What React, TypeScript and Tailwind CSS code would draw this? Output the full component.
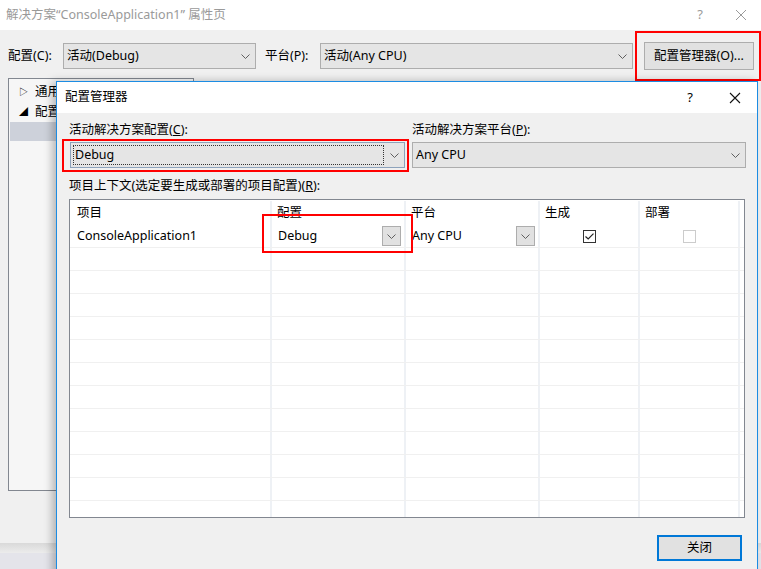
import React from 'react';

const FONT = { fontFamily: '"Noto Sans", "Noto Sans CJK SC", sans-serif' };

function Chevron({ className = '' }: { className?: string }) {
  return (
    <svg width="9" height="5" viewBox="0 0 9 5" className={className}>
      <path d="M0.5 0.5 L4.5 4.5 L8.5 0.5" fill="none" stroke="#5f5f5f" strokeWidth="1" />
    </svg>
  );
}

function Select({ value, width, focused = false }: { value: string; width: string; focused?: boolean }) {
  return (
    <div
      className={`${width} h-[26px] flex items-center border bg-[#e5e5e5] ${
        focused ? 'border-[#8da2bb]' : 'border-[#adadad]'
      }`}
    >
      {focused ? (
        <div className="ml-[2px] h-[20px] flex-1 border border-dotted border-[#333] flex items-center pl-[1px]">
          <span className="text-[12.5px] text-black">{value}</span>
        </div>
      ) : (
        <span className="flex-1 pl-[3px] text-[12.5px] text-black">{value}</span>
      )}
      <div className="w-[20px] flex items-center justify-center">
        <Chevron />
      </div>
    </div>
  );
}

function CellDrop({ value }: { value: string }) {
  return (
    <div className="flex items-center h-full pl-[6px] pr-[3px]">
      <span className="flex-1 text-[12.5px]">{value}</span>
      <div className="w-[19px] h-[20px] bg-[#e1e1e1] border border-[#adadad] flex items-center justify-center">
        <Chevron />
      </div>
    </div>
  );
}

const COLS = ['w-[202px]', 'w-[134px]', 'w-[134px]', 'w-[100px]', 'w-[100px]'];

export default function App() {
  const emptyRows = Array.from({ length: 12 });

  return (
    <div className="relative w-[761px] h-[569px] overflow-hidden bg-[#f0f0f0] text-black" style={FONT}>
      {/* 바깥 창 제목 */}
      <div className="h-[30px] bg-white flex items-center pl-[6px] pr-[14px]">
        <span className="flex-1 text-[12.5px] text-[#9a9a9a]">解决方案“ConsoleApplication1” 属性页</span>
        <span className="text-[13px] text-[#9a9a9a] mr-[32px]">?</span>
        <svg width="12" height="12" viewBox="0 0 12 12">
          <path d="M1 1 L11 11 M11 1 L1 11" stroke="#9a9a9a" strokeWidth="1" />
        </svg>
      </div>

      {/* 구성 / 플랫폼 줄 */}
      <div className="h-[48px] flex items-start pt-[13px] pl-[8px]">
        <span className="text-[12.5px] leading-[26px] w-[55px]">配置(C):</span>
        <Select value="活动(Debug)" width="w-[193px]" />
        <span className="text-[12.5px] leading-[26px] ml-[9px] w-[55px]">平台(P):</span>
        <Select value="活动(Any CPU)" width="w-[313px]" />
        <div className="ml-[11px] -mt-[1px] w-[110px] h-[28px] bg-[#e1e1e1] border border-[#adadad] flex items-center justify-center text-[12.5px]">
          配置管理器(O)...
        </div>
      </div>

      {/* 트리 영역 (오른쪽은 대화 상자에 가려짐) */}
      <div className="h-[465px] pl-[8px]">
        <div className="w-[186px] h-[413px] border border-[#828790] bg-[#f6f6f6] pt-[3px]">
          <div className="w-[47px] overflow-hidden">
            <div className="h-[20px] flex items-center pl-[10px] text-[12.5px] whitespace-nowrap">
              <span className="text-[9px] w-[16px] shrink-0">▷</span>通用
            </div>
            <div className="h-[20px] flex items-center pl-[10px] text-[12.5px] whitespace-nowrap">
              <span className="text-[9px] w-[16px] shrink-0">◢</span>配置
            </div>
            <div className="h-[19px] ml-[1px] bg-[#cdd1da]" />
          </div>
        </div>
      </div>
      <div className="h-[10px] bg-gradient-to-b from-[#d9d9d9] to-[#ececec]" />
      <div className="h-[16px] bg-[#e4e4ea]" />

      {/* 주석 빨간 상자: 配置管理器 버튼 */}
      <div className="absolute left-[635px] top-[31px] w-[126px] h-[50px] border-2 border-[#ff0000]" />

      {/* 配置管理器 대화 상자 */}
      <div className="absolute left-[56px] top-[81px] w-[702px] h-[500px] border border-[#1c8ce3] bg-[#f0f0f0] shadow-[-4px_0_8px_rgba(0,0,0,0.25)] flex flex-col">
        <div className="h-[31px] bg-white flex items-center pl-[8px] pr-[16px] shrink-0">
          <span className="flex-1 text-[12.5px]">配置管理器</span>
          <span className="text-[13px] mr-[36px]">?</span>
          <svg width="12" height="12" viewBox="0 0 12 12">
            <path d="M1 1 L11 11 M11 1 L1 11" stroke="#111" strokeWidth="1.1" />
          </svg>
        </div>

        <div className="px-[12px] pt-[9px] flex flex-col">
          <div className="flex gap-[7px]">
            <div className="w-[336px] flex flex-col gap-[4px]">
              <span className="text-[12.5px] leading-[16px]">
                活动解决方案配置(<span className="underline">C</span>):
              </span>
              <div className="pl-[1px]">
                <Select value="Debug" width="w-[335px]" focused />
              </div>
            </div>
            <div className="w-[334px] flex flex-col gap-[4px]">
              <span className="text-[12.5px] leading-[16px]">
                活动解决方案平台(<span className="underline">P</span>):
              </span>
              <Select value="Any CPU" width="w-[334px]" />
            </div>
          </div>

          <span className="mt-[10px] text-[12.5px] leading-[16px]">
            项目上下文(选定要生成或部署的项目配置)(<span className="underline">R</span>):
          </span>

          <div className="mt-[5px] h-[319px] border border-[#828790] bg-white overflow-hidden">
            <div className="flex h-[25px] pt-[1px]">
              {['项目', '配置', '平台', '生成', '部署'].map((h, i) => (
                <div
                  key={h}
                  className={`${COLS[i]} border-r-2 border-[#eef1f5] flex items-center ${i === 0 ? 'pl-[7px]' : 'pl-[5px]'} text-[12.5px]`}
                >
                  {h}
                </div>
              ))}
            </div>
            <div className="flex h-[23px] border-b border-[#f0f0f0]">
              <div className={`${COLS[0]} border-r-2 border-[#eef1f5] flex items-center pl-[7px] text-[12.5px]`}>
                ConsoleApplication1
              </div>
              <div className={`${COLS[1]} border-r-2 border-[#eef1f5]`}>
                <CellDrop value="Debug" />
              </div>
              <div className={`${COLS[2]} border-r-2 border-[#eef1f5]`}>
                <CellDrop value="Any CPU" />
              </div>
              <div className={`${COLS[3]} border-r-2 border-[#eef1f5] flex items-center justify-center`}>
                <div className="w-[13px] h-[13px] border border-[#333] bg-white flex items-center justify-center">
                  <svg width="9" height="7" viewBox="0 0 9 7">
                    <path d="M0.5 3.5 L3.2 6 L8.5 0.7" fill="none" stroke="#222" strokeWidth="1.2" />
                  </svg>
                </div>
              </div>
              <div className={`${COLS[4]} border-r-2 border-[#eef1f5] flex items-center justify-center`}>
                <div className="w-[13px] h-[13px] border border-[#cccccc] bg-white" />
              </div>
            </div>
            {emptyRows.map((_, r) => (
              <div key={r} className="flex h-[23px] border-b border-[#f0f0f0] last:border-b-0">
                {COLS.map((c, i) => (
                  <div key={i} className={`${c} border-r-2 border-[#eef1f5]`} />
                ))}
              </div>
            ))}
          </div>

          <div className="flex justify-end mt-[17px] pr-[3px]">
            <div className="w-[85px] h-[26px] border-2 border-[#0078d7] bg-[#e1e1e1] flex items-center justify-center text-[12.5px]">
              关闭
            </div>
          </div>
        </div>

        {/* 주석 빨간 상자 (대화 상자 기준 좌표) */}
        <div className="absolute left-[5px] top-[57px] w-[347px] h-[33px] border-2 border-[#ff0000]" />
        <div className="absolute left-[205px] top-[132px] w-[151px] h-[39px] border-2 border-[#ff0000]" />
      </div>
    </div>
  );
}
